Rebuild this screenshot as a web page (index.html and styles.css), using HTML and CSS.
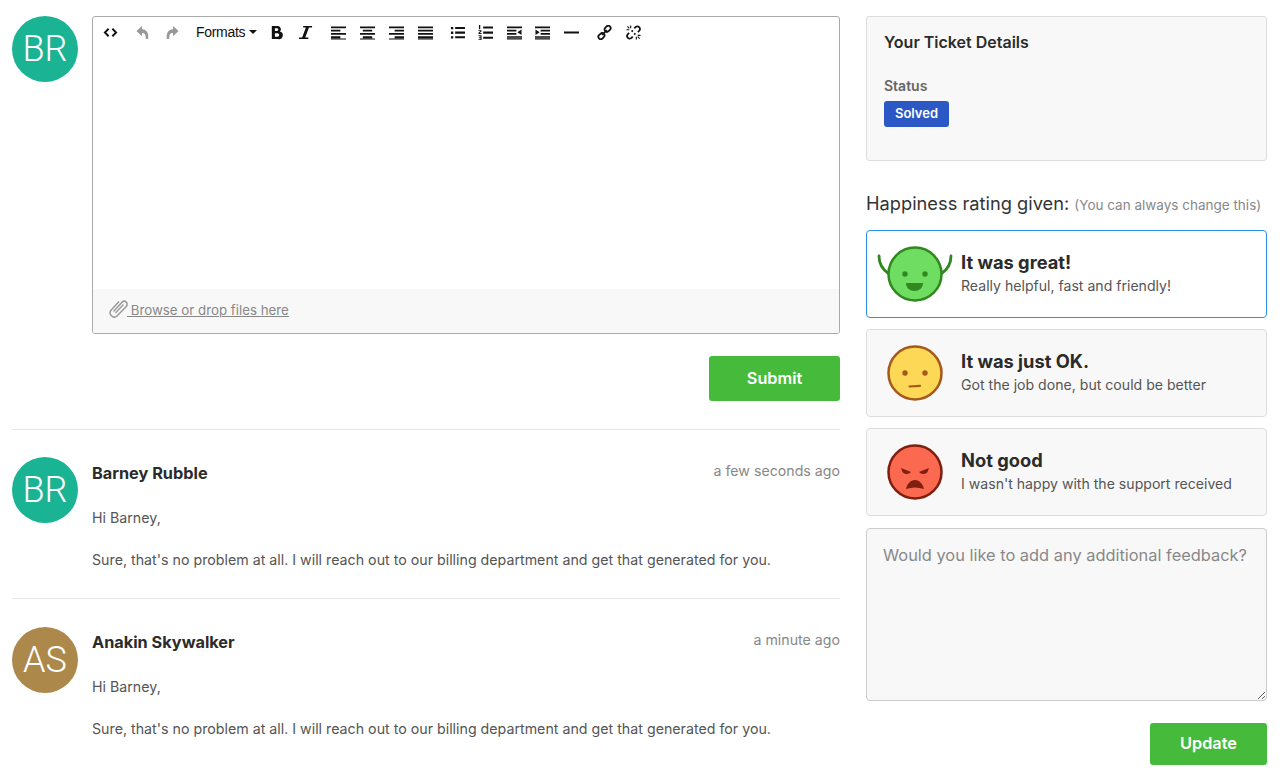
FILE: index.html
```html
<!DOCTYPE html>
<html lang="en">
<head>
<meta charset="utf-8">
<title>Ticket</title>
<link rel="stylesheet" href="styles.css">
</head>
<body>
<div class="page">
  <main class="left">
    <section class="reply">
      <div class="avatar teal">BR</div>
      <div class="reply-main">
        <div class="editor">
          <div class="toolbar">
            <div class="group">
              <span class="btn"><svg class="ic" viewBox="0 0 16 16"><path d="M6 4 2 8l4 4M10 4l4 4-4 4" fill="none" stroke="#111" stroke-width="2"/></svg></span>
            </div>
            <div class="group wide">
              <span class="btn"><svg class="ic" viewBox="0 0 16 16"><path d="M7.500 1 1.500 6.500 7.500 12V8.500c3 0 4 1.500 4 6.500h2.500c1-6-1.500-10.500-6.500-10.500z" fill="#999"/></svg></span>
              <span class="btn"><svg class="ic" viewBox="0 0 16 16"><path d="M8.500 1l6 5.500-6 5.500V8.500c-3 0-4 1.500-4 6.500H2C1 9 3.500 4.500 8.500 4.500z" fill="#999"/></svg></span>
            </div>
            <div class="group">
              <span class="formats">Formats<i class="caret"></i></span>
            </div>
            <div class="group">
              <span class="btn"><svg class="ic" viewBox="0 0 16 16"><path d="M3 1h6a3.500 3.500 0 0 1 2.600 6A3.800 3.800 0 0 1 9.500 15H3zM6.300 3.500v2.800h2.200a1.400 1.400 0 0 0 0-2.800zM6.300 8.700v3.800h2.700a1.900 1.900 0 0 0 0-3.800z" fill="#111" fill-rule="evenodd"/></svg></span>
              <span class="btn"><svg class="ic" viewBox="0 0 16 16"><path d="M5.500 1H15v1.700h-3.300L7.700 13.300H11V15H1v-1.700h3.400L8.400 2.700H5.500z" fill="#111"/></svg></span>
            </div>
            <div class="group aligns">
              <span class="btn"><svg class="ic" viewBox="0 0 16 16"><path d="M0 1.500h16v2H0zM0 5h10v2H0zM0 8.500h16v2H0zM0 12h10v2H0zM0 14.500h16v1H0z" fill="#111"/></svg></span>
              <span class="btn"><svg class="ic" viewBox="0 0 16 16"><path d="M0 1.500h16v2H0zM3 5h10v2H3zM0 8.500h16v2H0zM3 12h10v2H3zM0 14.500h16v1H0z" fill="#111"/></svg></span>
              <span class="btn"><svg class="ic" viewBox="0 0 16 16"><path d="M0 1.500h16v2H0zM6 5h10v2H6zM0 8.500h16v2H0zM6 12h10v2H6zM0 14.500h16v1H0z" fill="#111"/></svg></span>
              <span class="btn"><svg class="ic" viewBox="0 0 16 16"><path d="M0 1.500h16v2H0zM0 5h16v2H0zM0 8.500h16v2H0zM0 12h16v2H0zM0 14.500h16v1H0z" fill="#111"/></svg></span>
            </div>
            <div class="group lists">
              <span class="btn"><svg class="ic" viewBox="0 0 16 16"><path d="M1 2h2.500v2.500H1zM1 7h2.500v2.500H1zM1 12h2.500v2.500H1zM5.500 2H16v2.200H5.500zM5.500 7H16v2.200H5.500zM5.500 12H16v2.200H5.500z" fill="#111"/></svg></span>
              <span class="btn"><svg class="ic" viewBox="0 0 16 16"><path d="M5.500 1.500H16v2.200H5.500zM5.500 7H16v2.200H5.500zM5.500 12.500H16v2.200H5.500zM1 0h1.400v4.500H1zM0.500 5.500h3.300v1.200l-2 1.800h2v1h-3.300V8.300l2-1.800h-2zM0.500 11h3.300v5H.5v-.9h2.200v-1.100H1v-.9h1.700V12h-2.200z" fill="#111"/></svg></span>
              <span class="btn"><svg class="ic" viewBox="0 0 16 16"><path d="M0 1.500h16v2H0zM0 5h10v2H0zM0 8.500h10v2H0zM0 12h16v1.500H0zM0 14h16v1.500H0zM15.500 4.800v5.800L11 7.700z" fill="#111"/></svg></span>
              <span class="btn"><svg class="ic" viewBox="0 0 16 16"><path d="M0 1.500h16v2H0zM6 5h10v2H6zM6 8.500h10v2H6zM0 12h16v1.500H0zM0 14h16v1.500H0zM.5 4.800v5.800L5 7.700z" fill="#111"/></svg></span>
              <span class="btn"><svg class="ic" viewBox="0 0 16 16"><path d="M0 6.800h16v2.200H0z" fill="#111"/></svg></span>
            </div>
            <div class="group links">
              <span class="btn"><svg class="ic" viewBox="0 0 16 16"><g fill="none" stroke="#111" stroke-width="1.900"><rect x="7.800" y="1.600" width="7" height="5" rx="2.400" transform="rotate(-45 11.300 4.100)"/><rect x="1.200" y="9.400" width="7" height="5" rx="2.400" transform="rotate(-45 4.700 11.900)"/><path d="M5.500 10.500l5-5"/></g></svg></span>
              <span class="btn"><svg class="ic" viewBox="0 0 16 16"><g fill="none" stroke="#111"><path d="M8.800 3.600 10.400 2a2.800 2.800 0 0 1 3.900 3.900L12.700 7.500M7.200 12.400 5.600 14a2.800 2.800 0 0 1-3.900-3.900L3.300 8.500M6 5.800l1.300 1.300M8.700 8.900 10 10.200" stroke-width="1.900"/><path d="M5 .5V3.500M.5 5h3M1.500 1.500l2 2M11 15.500v-3M15.500 11h-3M14.500 14.500l-2-2" stroke-width="1.200"/></g></svg></span>
            </div>
          </div>
          <div class="editor-body"></div>
          <div class="editor-foot">
            <svg class="clip" viewBox="0 0 20 20"><path d="M4.500 13.500 13 4.200a3 3 0 0 1 4.300 4.200L8 18a4.200 4.200 0 0 1-6-5.800L10 3.500" fill="none" stroke="#999" stroke-width="1.500"/><path d="M6.500 15 14.500 6.500" fill="none" stroke="#999" stroke-width="1.300"/></svg>
            <span class="browse">&nbsp;Browse or drop files here</span>
          </div>
        </div>
        <div class="actions"><button class="primary submit">Submit</button></div>
      </div>
    </section>

    <article class="comment">
      <div class="avatar teal">BR</div>
      <div class="comment-main">
        <div class="comment-head"><strong class="name">Barney Rubble</strong><span class="time">a few seconds ago</span></div>
        <p class="line first">Hi Barney,</p>
        <p class="line">Sure, that's no problem at all. I will reach out to our billing department and get that generated for you.</p>
      </div>
    </article>

    <article class="comment">
      <div class="avatar brown">AS</div>
      <div class="comment-main">
        <div class="comment-head"><strong class="name">Anakin Skywalker</strong><span class="time">a minute ago</span></div>
        <p class="line first">Hi Barney,</p>
        <p class="line">Sure, that's no problem at all. I will reach out to our billing department and get that generated for you.</p>
      </div>
    </article>
  </main>

  <aside class="right">
    <section class="details">
      <h2 class="details-title">Your Ticket Details</h2>
      <div class="label">Status</div>
      <span class="badge">Solved</span>
    </section>

    <h3 class="rating-title">Happiness rating given: <small class="rating-note">(You can always change this)</small></h3>

    <div class="option selected">
      <svg class="face" viewBox="0 0 76 60">
        <path d="M2 12c0 8 4 14 10 18M74 12c0 8-4 14-10 18" fill="none" stroke="#30881f" stroke-width="2.800" stroke-linecap="round"/>
        <circle cx="38" cy="30" r="26.500" fill="#6fdc62" stroke="#30881f" stroke-width="2.500"/>
        <circle cx="28" cy="30" r="2.700" fill="#30881f"/><circle cx="48" cy="30" r="2.700" fill="#30881f"/>
        <path d="M29 39h17c0 5-4 8-8.500 8S29 44 29 39z" fill="#30881f"/>
      </svg>
      <div><div class="opt-title">It was great!</div><div class="opt-sub">Really helpful, fast and friendly!</div></div>
    </div>
    <div class="option">
      <svg class="face" viewBox="0 0 76 60">
        <circle cx="38" cy="30" r="26.500" fill="#fdd756" stroke="#a5591c" stroke-width="2.500"/>
        <circle cx="28" cy="30" r="2.700" fill="#a5591c"/><circle cx="48" cy="30" r="2.700" fill="#a5591c"/>
        <path d="M32.500 43.500 43 42.800" fill="none" stroke="#a5591c" stroke-width="2.200" stroke-linecap="round"/>
      </svg>
      <div><div class="opt-title">It was just OK.</div><div class="opt-sub">Got the job done, but could be better</div></div>
    </div>
    <div class="option">
      <svg class="face" viewBox="0 0 76 60">
        <circle cx="38" cy="30" r="26.500" fill="#fb6a50" stroke="#7e1f10" stroke-width="2.500"/>
        <path d="M24 26 34 30c-2 2.500-7 2.500-8.500 0zM52 26 42 30c2 2.500 7 2.500 8.500 0z" fill="#7e1f10"/>
        <path d="M29 47c1-5 4.500-9 9-9s8 4 9 9c-3-1-6-1.500-9-1.500s-6 .5-9 1.500z" fill="#7e1f10"/>
      </svg>
      <div><div class="opt-title">Not good</div><div class="opt-sub">I wasn't happy with the support received</div></div>
    </div>

    <textarea class="feedback" placeholder="Would you like to add any additional feedback?"></textarea>
    <div class="actions update-row"><button class="primary update">Update</button></div>
  </aside>
</div>
</body>
</html>
```
FILE: styles.css
```css
* { box-sizing: border-box; }
html, body { margin: 0; padding: 0; background: #fff; }
body { font-family: Inter, Lato, sans-serif; color: #555; font-size: 14px; overflow: hidden; height: 778px; }
.page { display: flex; gap: 26px; padding: 16px 13px 0 12px; align-items: flex-start; }
.left { width: 828px; flex: none; }
.right { width: 401px; flex: none; }

.avatar { width: 66px; height: 66px; border-radius: 50%; color: #fff; font-family: Roboto, sans-serif; font-weight: 300; font-size: 36px; display: flex; align-items: center; justify-content: center; flex: none; }
.teal { background: #1ab394; }
.brown { background: #ac894b; margin-top: 1px; }

.reply { display: flex; gap: 14px; padding-bottom: 28px; }
.reply-main { flex: 1; min-width: 0; }
.editor { height: 318px; border: 1px solid #a9a9a9; border-radius: 3px; display: flex; flex-direction: column; overflow: hidden; }
.toolbar { display: flex; align-items: center; height: 30px; padding-left: 3px; }
.group { display: flex; gap: 1px; margin-left: 4px; }
.group:first-child { margin-left: 0; }
.group.wide { gap: 2px; }
.group.aligns { margin-left: 5px; }
.group.lists { gap: 0.500px; }
.group.links { margin-left: 5px; }
.btn { width: 28px; height: 30px; display: flex; align-items: center; justify-content: center; }
.ic { width: 15px; height: 15px; display: block; }
.formats { width: 68px; height: 30px; padding-left: 6px; display: flex; align-items: center; font-family: "Liberation Sans", sans-serif; font-size: 14px; letter-spacing: -0.300px; color: #111; }
.caret { width: 0; height: 0; border-left: 4.500px solid transparent; border-right: 4.500px solid transparent; border-top: 4.500px solid #111; margin-left: 4px; }
.editor-body { flex: 1; }
.editor-foot { height: 44px; background: #f8f8f8; display: flex; align-items: center; padding-left: 16px; }
.clip { width: 20px; height: 20px; margin-top: -6px; flex: none; }
.browse { color: #888; font-size: 13.300px; text-decoration: underline; margin-left: -2px; margin-top: -2px; }

.actions { display: flex; justify-content: flex-end; }
.reply .actions { margin-top: 22px; }
.primary { border: 0; border-radius: 3px; background: #46bb3b; color: #fff; font-family: inherit; font-weight: 600; font-size: 16.300px; padding: 0 0 2px; }
.submit { width: 131px; height: 45px; }
.update { width: 117px; height: 42px; }

.comment { display: flex; gap: 14px; border-top: 1px solid #e6e6e6; padding-top: 27px; height: 169px; }
.comment-main { flex: 1; min-width: 0; }
.comment-head { display: flex; justify-content: space-between; height: 32px; }
.name { font-size: 16.300px; color: #2b2b2b; line-height: 32px; font-weight: 700; }
.time { color: #888; line-height: 28px; font-size: 14.200px; }
.line { margin: 0; line-height: 22px; height: 22px; font-size: 14.230px; color: #555; }
.line.first { margin: 18px 0 20px; }

.details { height: 145px; background: #f8f8f8; border: 1px solid #ddd; border-radius: 3px; padding: 13px 17px; }
.details-title { margin: 0; font-size: 16px; line-height: 24px; font-weight: 600; color: #2b2b2b; }
.label { margin-top: 21px; font-size: 14px; line-height: 22px; font-weight: 600; color: #666; }
.badge { display: inline-block; margin-top: 4px; width: 65px; height: 26px; line-height: 25px; text-align: center; background: #2b58c4; color: #fff; border-radius: 3px; font-size: 13px; font-weight: 600; }

.rating-title { margin: 30px 0 13px; font-size: 18.250px; line-height: 24px; font-weight: 400; color: #333; white-space: nowrap; }
.rating-note { font-size: 13.500px; color: #888; }

.option { height: 88px; display: flex; align-items: center; gap: 8px; padding-left: 10px; margin-bottom: 11px; background: #f8f8f8; border: 1px solid #ddd; border-radius: 4px; }
.option.selected { background: #fff; border-color: #2a8fe6; }
.face { width: 76px; height: 60px; flex: none; }
.opt-title { font-size: 18.300px; line-height: 24px; font-weight: 700; color: #2b2b2b; }
.opt-sub { font-size: 14.100px; line-height: 24px; color: #555; }

.feedback { display: block; width: 100%; height: 173px; margin-top: 12px; padding: 13px 14px 13px 16px; background: #f8f8f8; border: 1px solid #ccc; border-radius: 4px; font-family: inherit; font-size: 16.400px; line-height: 26px; color: #555; resize: vertical; }
.feedback::placeholder { color: #888; opacity: 1; }
.update-row { margin-top: 22px; }
```
